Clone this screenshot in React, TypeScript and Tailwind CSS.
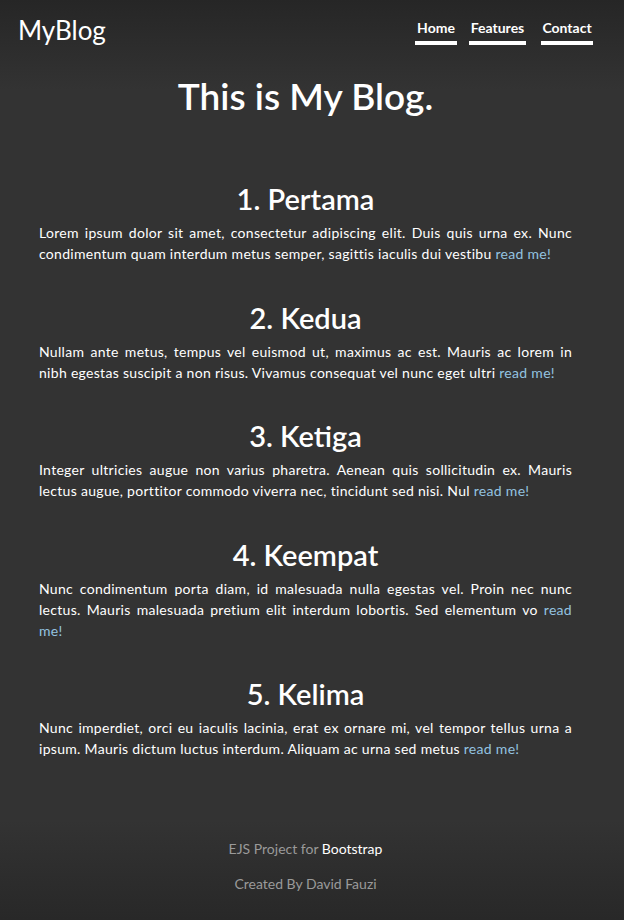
import React from "react";

type Post = { title: string; lines: React.ReactNode[] };

const Link = ({ children }: { children: React.ReactNode }) => (
  <span className="text-[#93c3e0]">{children}</span>
);

const posts: Post[] = [
  {
    title: "1. Pertama",
    lines: [
      "Lorem ipsum dolor sit amet, consectetur adipiscing elit. Duis quis urna ex. Nunc",
      <>condimentum quam interdum metus semper, sagittis iaculis dui vestibu <Link>read me!</Link></>,
    ],
  },
  {
    title: "2. Kedua",
    lines: [
      "Nullam ante metus, tempus vel euismod ut, maximus ac est. Mauris ac lorem in",
      <>nibh egestas suscipit a non risus. Vivamus consequat vel nunc eget ultri <Link>read me!</Link></>,
    ],
  },
  {
    title: "3. Ketiga",
    lines: [
      "Integer ultricies augue non varius pharetra. Aenean quis sollicitudin ex. Mauris",
      <>lectus augue, porttitor commodo viverra nec, tincidunt sed nisi. Nul <Link>read me!</Link></>,
    ],
  },
  {
    title: "4. Keempat",
    lines: [
      "Nunc condimentum porta diam, id malesuada nulla egestas vel. Proin nec nunc",
      <>lectus. Mauris malesuada pretium elit interdum lobortis. Sed elementum vo <Link>read</Link></>,
      <Link>me!</Link>,
    ],
  },
  {
    title: "5. Kelima",
    lines: [
      "Nunc imperdiet, orci eu iaculis lacinia, erat ex ornare mi, vel tempor tellus urna a",
      <>ipsum. Mauris dictum luctus interdum. Aliquam ac urna sed metus <Link>read me!</Link></>,
    ],
  },
];

export default function App() {
  return (
    <div
      className="w-[624px] h-[920px] bg-[linear-gradient(to_bottom,#262626_0px,#333333_90px,#333333_820px,#282828_920px)] text-white overflow-hidden"
      style={{ fontFamily: "Lato, 'Noto Sans', sans-serif" }}
    >
      <div className="w-[611px] flex flex-col">
        <header className="flex justify-between items-start px-[18px] pt-[14px]">
          <div className="text-[26px] leading-[32px] font-normal">MyBlog</div>
          <nav className="flex pt-[3px] text-[14px] font-bold leading-[21px]">
            <span className="w-[42px] text-center border-b-4 border-white pb-[3px]">Home</span>
            <span className="w-[57px] ml-[12px] text-center border-b-4 border-white pb-[3px]">Features</span>
            <span className="w-[52px] ml-[15px] text-center border-b-4 border-white pb-[3px]">Contact</span>
          </nav>
        </header>

        <h1 className="mt-[27px] text-center text-[37px] leading-[46px] font-semibold">
          This is My Blog.
        </h1>

        <main className="mt-[62px] ml-[39px] w-[533px] flex flex-col gap-[35.5px]">
          {posts.map((p) => (
            <section key={p.title} className="flex flex-col">
              <h2 className="text-center text-[29px] leading-[35px] font-semibold">{p.title}</h2>
              <div className="mt-[6px] text-[14px] leading-[21px] tracking-[0.3px]">
                {p.lines.map((l, i) => (
                  <div
                    key={i}
                    className={
                      i < p.lines.length - 1
                        ? "whitespace-nowrap text-justify [text-align-last:justify]"
                        : "whitespace-nowrap text-left"
                    }
                  >
                    {l}
                  </div>
                ))}
              </div>
            </section>
          ))}
        </main>

        <footer className="mt-[79px] flex flex-col items-center gap-[14px] text-[14px] leading-[21px] text-[#9a9a9a]">
          <p>
            EJS Project for <span className="text-white">Bootstrap</span>
          </p>
          <p>Created By David Fauzi</p>
        </footer>
      </div>
    </div>
  );
}
